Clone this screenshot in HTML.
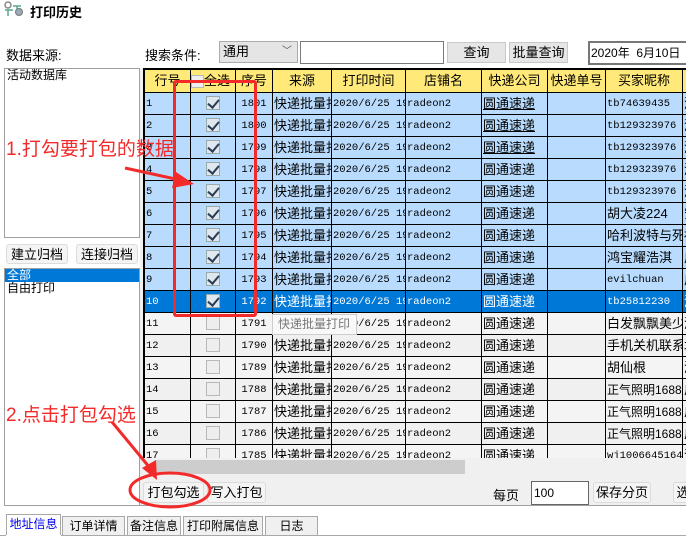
<!DOCTYPE html>
<html><head><meta charset="utf-8"><style>
*{margin:0;padding:0;box-sizing:border-box}
body{width:686px;height:542px;overflow:hidden;background:#fff;font-family:"Liberation Sans","Noto Sans CJK SC",sans-serif;font-size:13px;color:#000;position:relative}
.a{position:absolute}
.btn{position:absolute;background:#e6e6e6;border:1px solid #c8c8c8;text-align:center;line-height:19px;font-size:13px}
.btn2{position:absolute;background:#f4f4f4;border:1px solid #dcdcdc;border-radius:3px;text-align:center;line-height:19px;font-size:13px}
.box{position:absolute;border:1px solid #a0a0a0;background:#fff}
#grid{position:absolute;left:143px;top:68px;width:543px;height:390px;overflow:hidden;border-top:1px solid #000;border-left:1px solid #000}
table{border-collapse:collapse;table-layout:fixed;width:560px}
td{border:1px solid #000;height:22px;padding:0 1px;white-space:nowrap;overflow:hidden;font-size:10.5px;line-height:14px;vertical-align:middle;font-family:"Liberation Mono","Noto Sans CJK SC",monospace}
td.c{font-family:"Liberation Sans","Noto Sans CJK SC",sans-serif;font-size:13px}
tr.h td{background:#ffe978;text-align:center;font-family:"Liberation Sans","Noto Sans CJK SC",sans-serif;font-size:13px;height:23px}
tr.s td{background:#b9dcfe}
tr.x td{background:#0078d7;color:#fff}
tr.g td{background:#f4f4f4}
.ck{display:inline-block;width:14px;height:14px;border:1px solid #9aa;background:#dfe8ee;vertical-align:middle;position:relative}
.ck.on::after{content:"";position:absolute;left:3px;top:0px;width:5px;height:9px;border:solid #2a3d55;border-width:0 2.5px 2.5px 0;transform:rotate(40deg)}
.ck.off{background:#eeeeee;border-color:#b8b8b8}
.tab{position:absolute;top:516px;height:20px;border:1px solid #a8a8a8;border-bottom:none;background:#f0f0f0;text-align:center;line-height:19px;font-size:12px}
.red{color:#f32a2a;font-size:19px;position:absolute}
</style></head><body>
<svg class="a" style="left:3px;top:1px" width="22" height="16"><circle cx="5" cy="4" r="3" fill="none" stroke="#888" stroke-width="1.5"/><circle cx="16" cy="11" r="3.5" fill="#9ab" stroke="#777"/><path d="M2 9h8M5 9v6M10 5h8M14 5v3" stroke="#5a8" stroke-width="1.5"/></svg>
<div class="a" style="left:30px;top:2px;font-weight:bold;font-size:13px">打印历史</div>
<div class="a" style="left:6px;top:45px">数据来源:</div>
<div class="a" style="left:145px;top:45px">搜索条件:</div>
<div class="a" style="left:219px;top:41px;width:79px;height:22px;background:#e5e5e5;border:1px solid #acacac;padding-left:3px;line-height:19px">通用<span style="position:absolute;right:5px;top:0;font-size:10px;color:#555">﹀</span></div>
<div class="a" style="left:300px;top:41px;width:144px;height:23px;border:1px solid #7a7a7a;background:#fff"></div>
<div class="btn" style="left:447px;top:42px;width:59px;height:21px">查询</div>
<div class="btn" style="left:509px;top:42px;width:59px;height:21px">批量查询</div>
<div class="a" style="left:588px;top:41px;width:100px;height:24px;border:2px solid #777;border-right:none;background:#fff;line-height:20px;font-size:12px;padding-left:1px">2020年&nbsp; 6月10日</div>
<div class="box" style="left:4px;top:68px;width:136px;height:170px;padding-left:2px;line-height:13px;font-size:12px">活动数据库</div>
<div class="btn2" style="left:6px;top:244px;width:62px;height:20px">建立归档</div>
<div class="btn2" style="left:76px;top:244px;width:62px;height:20px">连接归档</div>
<div class="box" style="left:4px;top:268px;width:136px;height:238px;font-size:12px;line-height:13px"><div style="background:#0078d7;color:#fff;padding-left:2px">全部</div><div style="padding-left:2px">自由打印</div></div>
<div class="a" style="left:140px;top:68px;width:546px;height:438px;background:#f0f0f0;border-bottom:1px solid #a0a0a0"></div>
<div id="grid"><table>
<colgroup><col style="width:46px"><col style="width:45px"><col style="width:37px"><col style="width:59px"><col style="width:74px"><col style="width:76px"><col style="width:66px"><col style="width:58px"><col style="width:77px"><col style="width:22px"></colgroup>
<tr class="h"><td>行号</td><td style="text-align:left;padding:0"><span class="ck off" style="width:13px;height:13px"></span>全选</td><td>序号</td><td>来源</td><td>打印时间</td><td>店铺名</td><td>快递公司</td><td>快递单号</td><td>买家昵称</td><td></td></tr>
<tr class="s"><td>1</td><td align="center"><span class="ck on"></span></td><td align="center">1801</td><td class="c">快递批量打</td><td>2020/6/25 19</td><td>radeon2</td><td class="c"><u>圆通速递</u></td><td></td><td>tb74639435</td><td class="c">浙</td></tr>
<tr class="s"><td>2</td><td align="center"><span class="ck on"></span></td><td align="center">1800</td><td class="c">快递批量打</td><td>2020/6/25 19</td><td>radeon2</td><td class="c"><u>圆通速递</u></td><td></td><td>tb129323976</td><td class="c">浙</td></tr>
<tr class="s"><td>3</td><td align="center"><span class="ck on"></span></td><td align="center">1799</td><td class="c">快递批量打</td><td>2020/6/25 19</td><td>radeon2</td><td class="c"><u>圆通速递</u></td><td></td><td>tb129323976</td><td class="c">浙</td></tr>
<tr class="s"><td>4</td><td align="center"><span class="ck on"></span></td><td align="center">1798</td><td class="c">快递批量打</td><td>2020/6/25 19</td><td>radeon2</td><td class="c">圆通速递</td><td></td><td>tb129323976</td><td class="c">浙</td></tr>
<tr class="s"><td>5</td><td align="center"><span class="ck on"></span></td><td align="center">1797</td><td class="c">快递批量打</td><td>2020/6/25 19</td><td>radeon2</td><td class="c">圆通速递</td><td></td><td>tb129323976</td><td class="c">浙</td></tr>
<tr class="s"><td>6</td><td align="center"><span class="ck on"></span></td><td align="center">1796</td><td class="c">快递批量打</td><td>2020/6/25 19</td><td>radeon2</td><td class="c">圆通速递</td><td></td><td class="c">胡大凌224</td><td class="c">安</td></tr>
<tr class="s"><td>7</td><td align="center"><span class="ck on"></span></td><td align="center">1795</td><td class="c">快递批量打</td><td>2020/6/25 19</td><td>radeon2</td><td class="c">圆通速递</td><td></td><td class="c">哈利波特与死</td><td class="c">福</td></tr>
<tr class="s"><td>8</td><td align="center"><span class="ck on"></span></td><td align="center">1794</td><td class="c">快递批量打</td><td>2020/6/25 19</td><td>radeon2</td><td class="c">圆通速递</td><td></td><td class="c">鸿宝耀浩淇</td><td class="c">广</td></tr>
<tr class="s"><td>9</td><td align="center"><span class="ck on"></span></td><td align="center">1793</td><td class="c">快递批量打</td><td>2020/6/25 19</td><td>radeon2</td><td class="c">圆通速递</td><td></td><td>evilchuan</td><td class="c">广</td></tr>
<tr class="x"><td>10</td><td align="center"><span class="ck on"></span></td><td align="center">1792</td><td class="c">快递批量打</td><td>2020/6/25 19</td><td>radeon2</td><td class="c">圆通速递</td><td></td><td>tb25812230</td><td class="c">浙</td></tr>
<tr class="g"><td>11</td><td align="center"><span class="ck off"></span></td><td align="center">1791</td><td class="c">快递批量打</td><td>2020/6/25 19</td><td>radeon2</td><td class="c">圆通速递</td><td></td><td class="c">白发飘飘美少</td><td class="c">浙</td></tr>
<tr><td>12</td><td align="center"><span class="ck off"></span></td><td align="center">1790</td><td class="c">快递批量打</td><td>2020/6/25 19</td><td>radeon2</td><td class="c">圆通速递</td><td></td><td class="c">手机关机联系</td><td class="c">北</td></tr>
<tr class="g"><td>13</td><td align="center"><span class="ck off"></span></td><td align="center">1789</td><td class="c">快递批量打</td><td>2020/6/25 19</td><td>radeon2</td><td class="c">圆通速递</td><td></td><td class="c">胡仙根</td><td class="c">浙</td></tr>
<tr><td>14</td><td align="center"><span class="ck off"></span></td><td align="center">1788</td><td class="c">快递批量打</td><td>2020/6/25 19</td><td>radeon2</td><td class="c">圆通速递</td><td></td><td class="c" style="font-size:12px">正气照明1688</td><td class="c">广</td></tr>
<tr class="g"><td>15</td><td align="center"><span class="ck off"></span></td><td align="center">1787</td><td class="c">快递批量打</td><td>2020/6/25 19</td><td>radeon2</td><td class="c">圆通速递</td><td></td><td class="c" style="font-size:12px">正气照明1688</td><td class="c">广</td></tr>
<tr><td>16</td><td align="center"><span class="ck off"></span></td><td align="center">1786</td><td class="c">快递批量打</td><td>2020/6/25 19</td><td>radeon2</td><td class="c">圆通速递</td><td></td><td class="c" style="font-size:12px">正气照明1688</td><td class="c">广</td></tr>
<tr class="g"><td>17</td><td align="center"><span class="ck off"></span></td><td align="center">1785</td><td class="c">快递批量打</td><td>2020/6/25 19</td><td>radeon2</td><td class="c">圆通速递</td><td></td><td>wj1006645164</td><td class="c">浙</td></tr>
</table></div>
<div class="a" style="left:143px;top:458px;width:543px;height:17px;background:#f0f0f0"></div>
<div class="a" style="left:155px;top:460px;width:310px;height:14px;background:#cdcdcd"></div>
<div class="a" style="left:272px;top:314px;width:85px;height:21px;background:#f8f8f8;border:1px solid #ccc;color:#777;font-size:12px;line-height:19px;padding-left:5px">快递批量打印</div>
<div class="btn2" style="left:143px;top:482px;width:61px;height:21px">打包勾选</div>
<div class="btn2" style="left:207px;top:482px;width:59px;height:21px">写入打包</div>
<div class="a" style="left:493px;top:485px">每页</div>
<div class="a" style="left:531px;top:481px;width:58px;height:24px;border:1px solid #666;background:#fff;font-size:12px;line-height:22px;padding-left:2px">100</div>
<div class="btn2" style="left:593px;top:482px;width:58px;height:21px">保存分页</div>
<div class="btn2" style="left:673px;top:482px;width:20px;height:21px">选</div>
<div class="tab" style="left:6px;width:55px;top:514px;height:22px;background:#fff;color:#0000ee">地址信息</div>
<div class="tab" style="left:62px;width:63px">订单详情</div>
<div class="tab" style="left:127px;width:54px">备注信息</div>
<div class="tab" style="left:183px;width:80px">打印附属信息</div>
<div class="tab" style="left:265px;width:53px">日志</div>
<div class="a" style="left:0;top:535px;width:686px;height:1px;background:#a8a8a8"></div>
<div class="a" style="left:6px;top:535px;width:55px;height:2px;background:#fff"></div>
<div class="a" style="left:173px;top:80px;width:84px;height:237px;border:3px solid #f32a2a;border-radius:3px"></div>
<div class="red" style="left:6px;top:134px">1.打勾要打包的数据</div>
<div class="red" style="left:6px;top:400px">2.点击打包勾选</div>
<svg class="a" style="left:0;top:0" width="686" height="542">
<path d="M125 168 L180 180" stroke="#f32a2a" stroke-width="3"/>
<polygon points="194,184 176,172 172,188" fill="#f32a2a"/>
<path d="M112 422 L150 468" stroke="#f32a2a" stroke-width="3"/>
<polygon points="157,480 142,468 156,460" fill="#f32a2a"/>
<ellipse cx="170" cy="490" rx="40" ry="17" fill="none" stroke="#f32a2a" stroke-width="3"/>
</svg>
</body></html>
